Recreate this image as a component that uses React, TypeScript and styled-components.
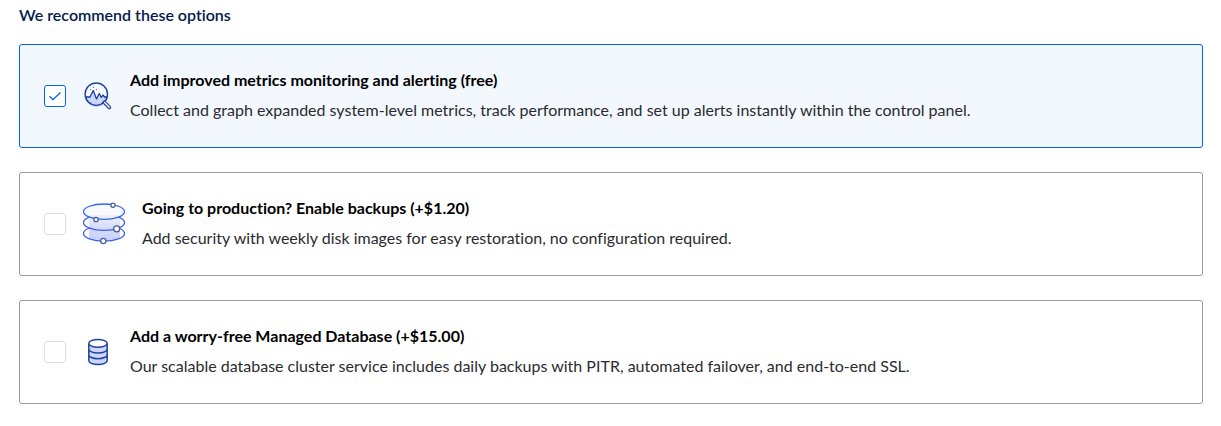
import React, { useState } from "react";
import styled, { createGlobalStyle } from "styled-components";

const GlobalStyle = createGlobalStyle`
  *, *::before, *::after { box-sizing: border-box; }
  body {
    margin: 0;
    background: #fff;
    color: #2a2b2f;
    font-family: Lato, "Liberation Sans", sans-serif;
    font-size: 16px;
    font-variant-ligatures: none;
    line-height: 22px;
  }
`;

const Section = styled.section`
  padding: 4px 18px 20px 19px;
`;

const Heading = styled.h2`
  margin: 0 0 18px;
  color: #031b4e;
  font-size: 16px;
  font-weight: 600;
  line-height: 22px;
`;

const OptionList = styled.div`
  display: flex;
  flex-direction: column;
  gap: 24px;
`;

const OptionCard = styled.label<{ $selected: boolean }>`
  display: flex;
  align-items: center;
  gap: 16px;
  padding: 24px;
  border: 1px solid ${(p) => (p.$selected ? "#0061eb" : "#999")};
  border-radius: 3px;
  background: ${(p) => (p.$selected ? "#f3f7fe" : "#fff")};
  cursor: pointer;
`;

const CheckboxSlot = styled.span`
  display: grid;
  flex: none;
  place-items: center;

  > * {
    grid-area: 1 / 1;
  }
`;

const Checkbox = styled.input`
  appearance: none;
  width: 22px;
  height: 22px;
  margin: 0;
  border: 1px solid #dfdfdf;
  border-radius: 3px;
  background: #fff;
  cursor: pointer;

  &:checked {
    border-color: #0061eb;
  }
`;

const CheckMark = styled.svg`
  pointer-events: none;
`;

const IconSvg = styled.svg`
  display: block;
  flex: none;
`;

const OptionText = styled.span`
  display: flex;
  flex-direction: column;
  gap: 8px;
  padding-bottom: 2px;
`;

const OptionTitle = styled.strong`
  color: #000;
  font-weight: 700;
`;

const OptionDescription = styled.span`
  color: #2a2b2f;
`;

function MonitoringIcon() {
  return (
    <IconSvg width="32" height="32" viewBox="0 0 32 32" fill="none" aria-hidden="true">
      <circle cx="14.3" cy="14.2" r="11.2" fill="#f8faff" />
      <path d="M3.2 17H8l3.2-6 3.3 8 2.8-5.500 2 4 1.700-2.500 1.500 2h3a11.2 11.2 0 0 1-22.3 0Z" fill="#cfd6fb" />
      <path d="M3.2 17H8l3.2-6.500 3.3 8.500 2.800-5.500 2 4 1.700-2.500 1.500 2h3" stroke="#153e9c" strokeWidth="1.3" strokeLinejoin="round" />
      <circle cx="14.3" cy="14.2" r="11.2" stroke="#1d469f" strokeWidth="1.4" />
      <path d="m22.3 22.4 5 5" stroke="#1d469f" strokeWidth="3.8" strokeLinecap="round" />
      <path d="m22.6 22.6 4.6 4.7" stroke="#eef3ff" strokeWidth="1.5" strokeLinecap="round" />
      <path d="M8 9.500h1M11 7.500h1M14 9.500h1" stroke="#4a69b8" strokeWidth="1" />
    </IconSvg>
  );
}

function BackupsIcon() {
  return (
    <IconSvg width="44" height="44" viewBox="0 0 44 44" fill="none" aria-hidden="true">
      <defs>
        <linearGradient id="backup-shade" x1="0" y1="0" x2="0" y2="1">
          <stop offset="0" stopColor="#eff1fe" />
          <stop offset="0.45" stopColor="#d8dcfc" />
          <stop offset="1" stopColor="#c9cffb" />
        </linearGradient>
      </defs>
      <ellipse cx="22" cy="9.7" rx="20.5" ry="7.7" fill="#f7f9ff" />
      <path d="M7 13h31v23q-15 6-31 0Z" fill="url(#backup-shade)" />
      <g stroke="#3762f2" strokeWidth="1.3">
        <ellipse cx="22" cy="9.7" rx="20.5" ry="7.7" />
        <path d="M7.500 15.200A20.500 7.700 0 1 0 36.500 15.200" />
        <path d="M7.500 26A20.500 7.700 0 1 0 36.500 26" />
      </g>
      <g fill="#fff" stroke="#4c5b96" strokeWidth="1.3">
        <circle cx="31" cy="3.3" r="2.1" />
        <circle cx="14" cy="17.5" r="2.2" />
        <circle cx="34.7" cy="26.8" r="3" />
        <circle cx="21.3" cy="39" r="2.6" />
      </g>
    </IconSvg>
  );
}

function DatabaseIcon() {
  return (
    <IconSvg width="32" height="32" viewBox="0 0 32 32" fill="none" aria-hidden="true">
      <path d="M6.8 7.5v17c0 2.3 4 4 9.2 4s9.2-1.7 9.2-4v-17" fill="#cfd6fb" />
      <g stroke="#1b459f" strokeWidth="1.5">
        <path d="M6.8 7.5v17c0 2.3 4 4 9.2 4s9.2-1.7 9.2-4v-17M6.8 13c0 2.3 4 4 9.2 4s9.2-1.7 9.2-4M6.8 18.7c0 2.3 4 4 9.2 4s9.2-1.7 9.2-4" />
        <ellipse cx="16" cy="7.4" rx="9.2" ry="3.9" fill="#fff" />
      </g>
    </IconSvg>
  );
}

const options = [
  {
    id: "monitoring",
    icon: <MonitoringIcon />,
    title: "Add improved metrics monitoring and alerting (free)",
    description:
      "Collect and graph expanded system-level metrics, track performance, and set up alerts instantly within the control panel.",
  },
  {
    id: "backups",
    icon: <BackupsIcon />,
    title: "Going to production? Enable backups (+$1.20)",
    description: "Add security with weekly disk images for easy restoration, no configuration required.",
  },
  {
    id: "database",
    icon: <DatabaseIcon />,
    title: "Add a worry-free Managed Database (+$15.00)",
    description:
      "Our scalable database cluster service includes daily backups with PITR, automated failover, and end-to-end SSL.",
  },
];

export default function App() {
  const [selected, setSelected] = useState<string[]>(["monitoring"]);

  const toggle = (id: string) =>
    setSelected((current) => (current.includes(id) ? current.filter((item) => item !== id) : [...current, id]));

  return (
    <>
      <GlobalStyle />
      <Section aria-labelledby="recommended-heading">
        <Heading id="recommended-heading">We recommend these options</Heading>
        <OptionList>
          {options.map((option) => {
            const checked = selected.includes(option.id);
            return (
              <OptionCard key={option.id} htmlFor={option.id} $selected={checked}>
                <CheckboxSlot>
                  <Checkbox id={option.id} type="checkbox" checked={checked} onChange={() => toggle(option.id)} />
                  {checked && (
                    <CheckMark width="14" height="14" viewBox="0 0 14 14" fill="none" aria-hidden="true">
                      <path d="m1.5 7.2 3.5 3.5 7.5-7.2" stroke="#0061eb" strokeWidth="1.3" />
                    </CheckMark>
                  )}
                </CheckboxSlot>
                {option.icon}
                <OptionText>
                  <OptionTitle>{option.title}</OptionTitle>
                  <OptionDescription>{option.description}</OptionDescription>
                </OptionText>
              </OptionCard>
            );
          })}
        </OptionList>
      </Section>
    </>
  );
}
